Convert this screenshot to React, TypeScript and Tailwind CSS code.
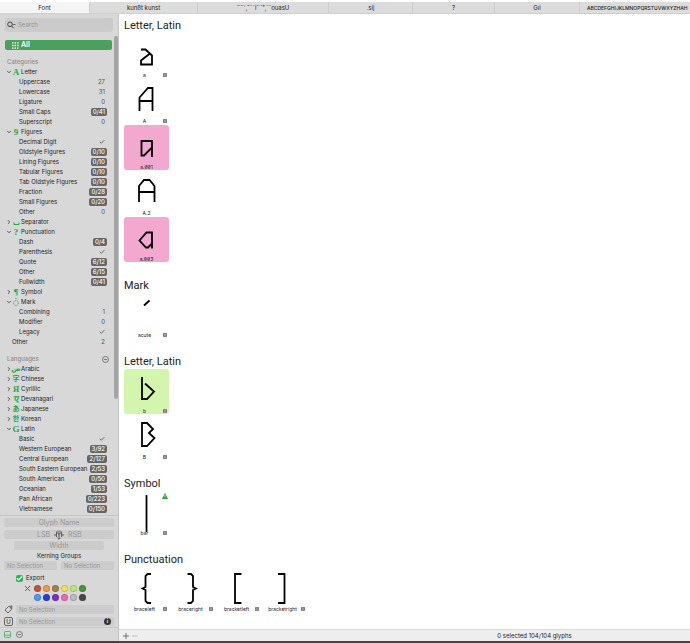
import type { ReactNode } from 'react';
import { Check, ChevronDown, ChevronRight } from 'lucide-react';

type Item = { label: string; value?: string };

type Group = {
  label: string;
  icon?: ReactNode;
  small?: boolean;
  open?: boolean;
  items?: Item[];
};

type Glyph = {
  name: string;
  path: string;
  color?: 'pink' | 'green';
  unicode?: boolean;
  warning?: boolean;
};

type Section = { title: string; glyphs: Glyph[] };

const tabs = [
  { label: 'Font', width: 'w-[90px]' },
  { label: 'kunßt kunst', width: 'w-[108px]' },
  { label: '¨˝˘¸ˆˇ˜i˙´¯˚¸ˇˇouasU', width: 'w-[131px]' },
  { label: '.sij', width: 'w-[84px]' },
  { label: '?', width: 'w-[82px]' },
  { label: 'Gıi', width: 'w-[85px]' },
];

const SpaceIcon = (
  <svg viewBox="0 0 7 7" className="size-[7px]" fill="none" stroke="currentColor">
    <path d="M1 3.5v2h5v-2" />
  </svg>
);

const MarkIcon = (
  <svg viewBox="0 0 8 8" className="size-2" fill="none" stroke="currentColor">
    <circle cx="4" cy="5" r="2.4" strokeDasharray="1 0.9" />
    <path d="M4 0v1.2" />
  </svg>
);

const categories: Group[] = [
  {
    label: 'Letter',
    icon: 'A',
    open: true,
    items: [
      { label: 'Uppercase', value: '27' },
      { label: 'Lowercase', value: '31' },
      { label: 'Ligature', value: '0' },
      { label: 'Small Caps', value: '0/41' },
      { label: 'Superscript', value: '0' },
    ],
  },
  {
    label: 'Figures',
    icon: '9',
    open: true,
    items: [
      { label: 'Decimal Digit' },
      { label: 'Oldstyle Figures', value: '0/10' },
      { label: 'Lining Figures', value: '0/10' },
      { label: 'Tabular Figures', value: '0/10' },
      { label: 'Tab Oldstyle Figures', value: '0/10' },
      { label: 'Fraction', value: '0/28' },
      { label: 'Small Figures', value: '0/20' },
      { label: 'Other', value: '0' },
    ],
  },
  { label: 'Separator', icon: SpaceIcon },
  {
    label: 'Punctuation',
    icon: '?',
    open: true,
    items: [
      { label: 'Dash', value: '0/4' },
      { label: 'Parenthesis' },
      { label: 'Quote', value: '6/12' },
      { label: 'Other', value: '6/15' },
      { label: 'Fullwidth', value: '0/41' },
    ],
  },
  { label: 'Symbol', icon: '¶' },
  {
    label: 'Mark',
    icon: MarkIcon,
    open: true,
    items: [
      { label: 'Combining', value: '1' },
      { label: 'Modifier', value: '0' },
      { label: 'Legacy' },
    ],
  },
];

const languages: Group[] = [
  { label: 'Arabic', icon: 'ض', small: true },
  { label: 'Chinese', icon: '字', small: true },
  { label: 'Cyrillic', icon: 'Я' },
  { label: 'Devanagari', icon: 'ए' },
  { label: 'Japanese', icon: 'あ', small: true },
  { label: 'Korean', icon: '한', small: true },
  {
    label: 'Latin',
    icon: 'G',
    open: true,
    items: [
      { label: 'Basic' },
      { label: 'Western European', value: '3/92' },
      { label: 'Central European', value: '2/127' },
      { label: 'South Eastern European', value: '2/53' },
      { label: 'South American', value: '0/50' },
      { label: 'Oceanian', value: '1/53' },
      { label: 'Pan African', value: '0/223' },
      { label: 'Vietnamese', value: '0/150' },
    ],
  },
];

// glyph outlines are drawn in a 45x45 cell
const sections: Section[] = [
  {
    title: 'Letter, Latin',
    glyphs: [
      { name: 'a', unicode: true, path: 'M17 16.5h4.5l6.500 6v9h-11v-4l9-7' },
      { name: 'A', unicode: true, path: 'M28.500 32v-23h-4.500l-8.500 9.500v13.500M15.500 22h13' },
      { name: 'a.001', color: 'pink', path: 'M28 32v-16h-10.500v14.500h2.500l8-8' },
      { name: 'A.2', path: 'M15 31v-16l5-6h5.500l5 6v16M15 21h15.500' },
      { name: 'a.003', color: 'pink', path: 'M28 31.500v-16h-5.500l-7 8 6.500 7h2l4-4' },
    ],
  },
  {
    title: 'Mark',
    glyphs: [{ name: 'acute', unicode: true, path: 'M20 12.500l5.500-5' }],
  },
  {
    title: 'Letter, Latin',
    glyphs: [
      { name: 'b', color: 'green', unicode: true, path: 'M18 8v22h5l7-7.500-9-8' },
      { name: 'B', unicode: true, path: 'M18 8h5l6 6-4 4 5.500 5-7.500 8h-5z' },
    ],
  },
  {
    title: 'Symbol',
    glyphs: [{ name: 'bar', unicode: true, warning: true, path: 'M22.500 4v37' }],
  },
  {
    title: 'Punctuation',
    glyphs: [
      { name: 'braceleft', unicode: true, path: 'M27 7h-3.500l-2 2v11l-3 1.500 3 1.500v11l2 2h3.500' },
      { name: 'braceright', unicode: true, path: 'M17.500 7h3.500l2 2v11l3 1.500-3 1.500v11l-2 2h-3.500' },
      { name: 'bracketleft', unicode: true, path: 'M25.500 7h-6.500v29h6.500' },
      { name: 'bracketright', unicode: true, path: 'M16 7h6.500v29h-6.500' },
    ],
  },
];

function Value({ value }: { value?: string }) {
  if (!value) return <Check className="mr-0.5 size-1.5 text-neutral-700" strokeWidth={3} />;
  if (value.includes('/')) {
    return (
      <span className="flex h-2 shrink-0 items-center rounded-[2px] bg-[#666] px-0.5 font-medium text-white">
        {value}
      </span>
    );
  }
  return <span className="mr-0.5 text-neutral-600">{value}</span>;
}

function GroupRows({ group }: { group: Group }) {
  const Chevron = group.open ? ChevronDown : ChevronRight;
  return (
    <li>
      <button className="flex h-2.5 w-full items-center">
        <Chevron className="size-1.5 shrink-0 text-neutral-700" strokeWidth={3.5} />
        <span
          className={`mr-px flex w-2 shrink-0 justify-center font-['Liberation_Serif','DejaVu_Sans','Noto_Sans_CJK_JP','Noto_Sans_CJK_KR',serif] leading-[10px] font-bold text-[#1faa45] ${group.small ? 'text-[7px]' : 'text-[9px]'}`}
        >
          {group.icon}
        </span>
        {group.label}
      </button>
      {group.items && (
        <ul>
          {group.items.map((item) => (
            <li key={item.label} className="flex h-2.5 items-center justify-between pl-[13px] whitespace-nowrap">
              {item.label}
              <Value value={item.value} />
            </li>
          ))}
        </ul>
      )}
    </li>
  );
}

function MinusCircle() {
  return (
    <svg viewBox="0 0 8 8" className="size-[7px]" fill="none" stroke="currentColor" strokeWidth="0.8">
      <circle cx="4" cy="4" r="3.4" />
      <path d="M2.200 4h3.600" />
    </svg>
  );
}

function Sidebar() {
  return (
    <aside className="flex w-[119px] shrink-0 flex-col border-r border-[#c4c4c4] bg-[#d8d8d8]">
      <div className="mx-[5px] mt-1 flex h-[14px] shrink-0 items-center rounded-[3px] bg-[#cbcbcb] px-0.5">
        <svg viewBox="0 0 9 8" className="h-2 w-[9px] shrink-0" fill="none" stroke="#444" strokeWidth="1">
          <circle cx="3" cy="3.300" r="2.300" />
          <path d="M4.700 5l2 2.200M6.300 3l1 1 1-1" />
        </svg>
        <input
          aria-label="Search"
          placeholder="Search"
          className="ml-0.5 w-full min-w-0 bg-transparent text-[6px] leading-[10px] outline-none placeholder:text-[#929292]"
        />
      </div>

      <div className="flex min-h-0 flex-1 overflow-hidden border-b border-[#c6c6c6] pt-1">
        <nav className="min-w-0 flex-1 pt-1 pl-[5px]">
          <button className="flex h-2.5 w-[107px] items-center gap-0.5 rounded-[2px] bg-[#4d9f5d] pl-[7px] text-[7px] leading-[10px] font-semibold text-white">
            <svg viewBox="0 0 8 8" className="size-[7px]" stroke="white" strokeWidth="1.600" strokeDasharray="1.700 1.200">
              <path d="M0 1h8M0 4h8M0 7h8" />
            </svg>
            All
          </button>
          <h2 className="mt-[7px] h-2.5 pl-0.5 leading-[10px] font-medium text-[#8c8c8c]">Categories</h2>
          <ul className="mr-[7px] pl-px">
            {categories.map((group) => (
              <GroupRows key={group.label} group={group} />
            ))}
            <li className="flex h-2.5 items-center justify-between pl-1.5">
              Other
              <Value value="2" />
            </li>
          </ul>
          <div className="mt-[7px] mr-[5px] flex h-2.5 items-center justify-between pl-0.5">
            <h2 className="font-medium text-[#8c8c8c]">Languages</h2>
            <button aria-label="Remove language" className="text-neutral-600">
              <MinusCircle />
            </button>
          </div>
          <ul className="mr-[7px] pl-px">
            {languages.map((group) => (
              <GroupRows key={group.label} group={group} />
            ))}
          </ul>
        </nav>
        <div className="h-[363px] w-1 shrink-0 rounded-full bg-[#a4a4a4]" />
      </div>

      <Inspector />
    </aside>
  );
}

const swatches = [
  'bg-[#c4553a]', 'bg-[#ee9c48]', 'bg-[#a5814c]', 'bg-[#f1de5b]', 'bg-[#b9e878]', 'bg-[#4a963c]',
  'bg-[#5298ec]', 'bg-[#2440dc]', 'bg-[#7c2fc4]', 'bg-[#ea6caf]', 'bg-[#bcbcbc]', 'bg-[#484848]',
];

const field = 'h-[9px] min-w-0 rounded-[2px] bg-[#cccccc] outline-none placeholder:text-[#969696]';

function Inspector() {
  return (
    <div className="flex shrink-0 flex-col px-1 pt-0.5">
      <input aria-label="Glyph name" placeholder="Glyph Name" className={`${field} text-center text-[7px]`} />
      <div className="mt-[3px] flex h-[9px] items-center rounded-[2px] bg-[#cccccc]">
        <input aria-label="Left side bearing" placeholder="LSB" className="w-0 flex-1 pr-1 text-right text-[7px] outline-none placeholder:text-[#969696]" />
        <svg viewBox="0 0 10 10" className="size-2.5 shrink-0" fill="none" stroke="#444" strokeWidth="0.800">
          <path d="M0 5h2.500M2.500 1.500v5.500M4 0.500v3.500h2v-3.500M7.500 1.500v5.500M7.500 5h2.500" />
          <path d="M5 4v5M3.700 8l1.300 1.300 1.300-1.300" />
        </svg>
        <input aria-label="Right side bearing" placeholder="RSB" className="w-0 flex-1 pl-1 text-[7px] outline-none placeholder:text-[#969696]" />
      </div>
      <input aria-label="Width" placeholder="Width" className={`${field} mx-2.5 mt-0.5 text-center text-[7px]`} />
      <p className="mt-0.5 text-center leading-[8px]">Kerning Groups</p>
      <div className="mt-px grid grid-cols-2 gap-1">
        <input aria-label="Left kerning group" placeholder="No Selection" className={`${field} px-[3px] text-[6px]`} />
        <input aria-label="Right kerning group" placeholder="No Selection" className={`${field} px-[3px] text-[6px]`} />
      </div>
      <label className="mt-1 flex h-2 items-center gap-[3px] pl-3 text-[6px]">
        <span className="relative flex size-[7px]">
          <input type="checkbox" defaultChecked className="size-[7px] appearance-none rounded-[2px] bg-[#32b552]" />
          <Check className="pointer-events-none absolute inset-0 size-[7px] text-white" strokeWidth={4} />
        </span>
        Export
      </label>
      <div className="mt-[3px] flex items-start pl-5">
        <button aria-label="No color" className="mr-[3px]">
          <svg viewBox="0 0 7 7" className="size-[7px]" stroke="#555" strokeWidth="0.900">
            <path d="M1 1l5 5M6 1l-5 5" />
          </svg>
        </button>
        <div className="grid grid-cols-6 gap-0.5">
          {swatches.map((color) => (
            <button key={color} aria-label="Color label" className={`size-[7px] rounded-full border border-black/15 ${color}`} />
          ))}
        </div>
      </div>
      <div className="mt-1 flex items-center gap-[3px]">
        <svg viewBox="0 0 9 9" className="size-[9px] shrink-0" fill="none" stroke="#555" strokeWidth="0.900">
          <path d="M1 5l3.500-3.500 3.500-.5-.5 3.500-3.500 3.500z" />
          <circle cx="6.300" cy="2.800" r="0.400" />
        </svg>
        <input aria-label="Tags" placeholder="No Selection" className={`${field} flex-1 px-[3px]`} />
      </div>
      <div className="mt-[3px] flex items-center gap-[3px]">
        <span className="flex size-[9px] shrink-0 items-center justify-center rounded-[2px] border border-[#666] text-[6px] leading-none">U</span>
        <div className="flex h-[9px] flex-1 items-center rounded-[2px] bg-[#cccccc] px-[3px]">
          <input aria-label="Unicode" placeholder="No Selection" className="w-0 flex-1 outline-none placeholder:text-[#969696]" />
          <button aria-label="Info" className="flex size-[7px] items-center justify-center rounded-full bg-[#333] text-[5px] leading-none font-bold text-white">
            i
          </button>
        </div>
      </div>
      <div className="-mx-1 mt-px flex h-[14px] items-center gap-[5px] border-t border-[#c8c8c8] pl-1 text-neutral-600">
        <button aria-label="Toggle preview" className="text-[#36b553]">
          <svg viewBox="0 0 8 8" className="size-[7px]" fill="none" stroke="currentColor">
            <rect x="0.500" y="0.500" width="7" height="7" rx="1" />
            <path d="M0.500 4.800h7" />
          </svg>
        </button>
        <button aria-label="Filter">
          <MinusCircle />
        </button>
      </div>
    </div>
  );
}

const cellColor = {
  pink: 'bg-[#f2a8cf]',
  green: 'bg-[#d3f5ae]',
};

function GlyphCell({ glyph }: { glyph: Glyph }) {
  return (
    <button
      aria-label={glyph.name}
      className={`relative size-[45px] rounded-[3px] ${glyph.color ? cellColor[glyph.color] : ''}`}
    >
      <svg viewBox="0 0 45 45" className="size-[45px]" fill="none" stroke="#000" strokeWidth="1.800">
        <path d={glyph.path} />
      </svg>
      <span className="absolute inset-x-0 bottom-0 flex items-center justify-between px-0.5 text-[5px] leading-[6px] slashed-zero">
        <span className="flex-1 text-center">{glyph.name}</span>
        {glyph.unicode && (
          <svg viewBox="0 0 4 4" className="size-1 shrink-0" fill="#bbb" stroke="#666" strokeWidth="0.800">
            <path d="M0.400 0.400h3.200v3.200h-3.200zM0.400 2h3.200" />
          </svg>
        )}
      </span>
      {glyph.warning && (
        <svg viewBox="0 0 6 6" className="absolute top-0.5 right-px size-1.5">
          <path d="M3 0l3 6h-6z" fill="#259a35" />
          <path d="M3 2v2M3 4.500v.7" stroke="white" strokeWidth="0.700" />
        </svg>
      )}
    </button>
  );
}

export default function App() {
  return (
    <div className="flex h-screen flex-col overflow-hidden border-b-2 border-[#444] bg-white font-['Inter',sans-serif] text-[6px] leading-[10px] text-[#222]">
      <div role="tablist" className="mt-0.5 flex h-3 shrink-0 border-b border-[#cfcfcf] bg-[#dcdcdc]">
        {tabs.map((tab, i) => (
          <button
            key={tab.label}
            role="tab"
            aria-selected={i === 0}
            className={`shrink-0 border-r border-[#cdcdcd] ${tab.width} ${i === 0 ? 'bg-[#f5f5f5]' : ''}`}
          >
            {tab.label}
          </button>
        ))}
        <button role="tab" aria-selected={false} className="min-w-0 flex-1 overflow-hidden pl-[7px] text-left text-[5px] font-medium whitespace-nowrap">
          ABCDEFGHIJKLMNOPQRSTUVWXYZHAH
        </button>
      </div>

      <div className="flex min-h-0 flex-1">
        <Sidebar />
        <main className="flex min-w-0 flex-1 flex-col">
          <div className="flex min-h-0 flex-1 flex-col gap-[17px] overflow-hidden pt-[5px] pl-[5px]">
            {sections.map((section, i) => (
              <section key={i}>
                <h2 className="font-['Roboto',sans-serif] text-[11px] leading-[14px]">{section.title}</h2>
                <div className={section.title === 'Punctuation' ? 'flex gap-px' : 'flex flex-col gap-px'}>
                  {section.glyphs.map((glyph) => (
                    <GlyphCell key={glyph.name} glyph={glyph} />
                  ))}
                </div>
              </section>
            ))}
          </div>
          <footer className="flex h-3 shrink-0 items-center border-t border-[#dcdcdc] bg-[#eeeeee] pl-1">
            <svg viewBox="0 0 16 6" className="h-1.5 w-4" strokeWidth="0.900">
              <path d="M0 3h6M3 0v6" stroke="#666" />
              <path d="M9 3h6" stroke="#bbb" />
            </svg>
            <p className="flex-1 pl-60 text-center">0 selected 104/104 glyphs</p>
          </footer>
        </main>
      </div>
    </div>
  );
}
